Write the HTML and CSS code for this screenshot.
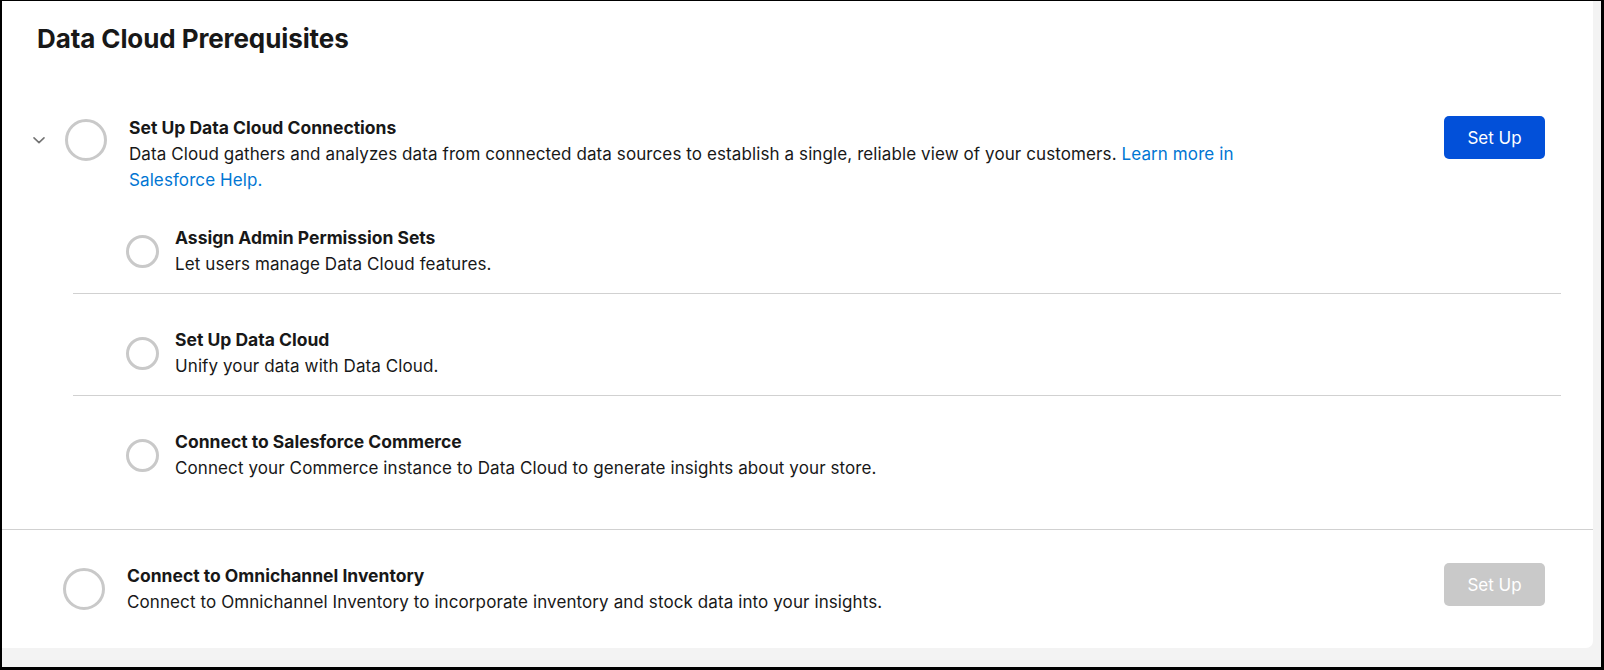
FILE: index.html
```html
<!DOCTYPE html>
<html lang="en">
<head>
<meta charset="utf-8">
<title>Data Cloud Prerequisites</title>
<link rel="stylesheet" href="styles.css">
</head>
<body>
<div class="frame">
  <div class="card">
    <h1 class="page-title">Data Cloud Prerequisites</h1>

    <section class="step">
      <div class="step-head">
        <button class="chevron" aria-label="Collapse">
          <svg width="14" height="14" viewBox="0 0 14 14"><path d="M2 4.8 L7 9.6 L12 4.8" fill="none" stroke="#747474" stroke-width="1.6" stroke-linecap="round" stroke-linejoin="round"/></svg>
        </button>
        <span class="circle circle-lg"></span>
        <div class="step-text">
          <h2 class="step-title">Set Up Data Cloud Connections</h2>
          <p class="step-desc">Data Cloud gathers and analyzes data from connected data sources to establish a single, reliable view of your customers. <a class="link" href="#">Learn more in Salesforce Help.</a></p>
        </div>
        <button class="btn btn-primary">Set Up</button>
      </div>

      <ul class="substeps">
        <li class="substep">
          <span class="circle circle-sm"></span>
          <div class="step-text">
            <h3 class="step-title">Assign Admin Permission Sets</h3>
            <p class="step-desc">Let users manage Data Cloud features.</p>
          </div>
        </li>
        <li class="substep">
          <span class="circle circle-sm"></span>
          <div class="step-text">
            <h3 class="step-title">Set Up Data Cloud</h3>
            <p class="step-desc">Unify your data with Data Cloud.</p>
          </div>
        </li>
        <li class="substep">
          <span class="circle circle-sm"></span>
          <div class="step-text">
            <h3 class="step-title">Connect to Salesforce Commerce</h3>
            <p class="step-desc">Connect your Commerce instance to Data Cloud to generate insights about your store.</p>
          </div>
        </li>
      </ul>
    </section>

    <section class="step step-last">
      <div class="step-head step-head-plain">
        <span class="circle circle-lg"></span>
        <div class="step-text">
          <h2 class="step-title">Connect to Omnichannel Inventory</h2>
          <p class="step-desc">Connect to Omnichannel Inventory to incorporate inventory and stock data into your insights.</p>
        </div>
        <button class="btn btn-disabled" disabled>Set Up</button>
      </div>
    </section>
  </div>
</div>
</body>
</html>
```

FILE: styles.css
```css
* { box-sizing: border-box; }

html, body {
  margin: 0;
  padding: 0;
}

body {
  font-family: Inter, "Liberation Sans", Arial, sans-serif;
  color: #181818;
  background: #000;
}

.frame {
  width: 1604px;
  height: 670px;
  border: solid #000;
  border-width: 1px 3px 3px 2px;
  background: #f3f3f3;
  padding: 0 8px 19px 0;
  display: flex;
  flex-direction: column;
}

.card {
  flex: 1;
  background: #fff;
  border-bottom-right-radius: 7px;
  display: flex;
  flex-direction: column;
}

.page-title {
  margin: 23px 0 0 35px;
  font-size: 26px;
  line-height: 30px;
  font-weight: 700;
  letter-spacing: -0.1px;
}

.step {
  border-bottom: 1px solid #d1d1d1;
  padding: 61px 0 32px;
}

.step-last {
  border-bottom: 0;
  padding: 33px 0 0;
}

.step-head {
  display: flex;
  align-items: flex-start;
  padding-right: 48px;
}

.chevron {
  width: 30px;
  height: 30px;
  margin: 10px 11px 0 22px;
  padding: 0;
  border: 0;
  background: transparent;
  display: flex;
  align-items: center;
  justify-content: center;
}

.circle {
  flex: none;
  display: block;
  border-radius: 50%;
  border: 3px solid #c9c9c9;
}

.circle-lg {
  width: 42px;
  height: 42px;
  margin-top: 4px;
}

.step-head-plain .circle-lg {
  margin-left: 61px;
  margin-top: 5px;
}

.step-text {
  flex: 1;
  min-width: 0;
}

.step-head .step-text {
  margin-left: 22px;
  max-width: 1140px;
}

.step-head-plain .step-text {
  margin-left: 22px;
}

.step-title {
  margin: 0;
  font-size: 17.5px;
  line-height: 26px;
  font-weight: 700;
}

.step-desc {
  margin: 0;
  font-size: 17px;
  line-height: 26px;
  font-weight: 400;
  letter-spacing: 0.1px;
}

.link {
  color: #0176d3;
  text-decoration: none;
}

.btn {
  margin-left: auto;
  flex: none;
  width: 101px;
  height: 43px;
  border-radius: 5px;
  border: 0;
  font-family: inherit;
  font-size: 17px;
  color: #fff;
}

.btn-primary {
  background: #0250d9;
  margin-top: 1px;
}

.btn-disabled {
  background: #c9c9c9;
}

.substeps {
  list-style: none;
  margin: 32px 32px 0 71px;
  padding: 0;
}

.substep {
  display: flex;
  align-items: center;
  padding: 33px 0 16px;
  border-top: 1px solid #d1d1d1;
}

.substep:first-child {
  border-top: 0;
  padding-top: 0;
}

.substep .circle-sm {
  width: 33px;
  height: 33px;
  margin-left: 53px;
  margin-right: 16px;
}
```
